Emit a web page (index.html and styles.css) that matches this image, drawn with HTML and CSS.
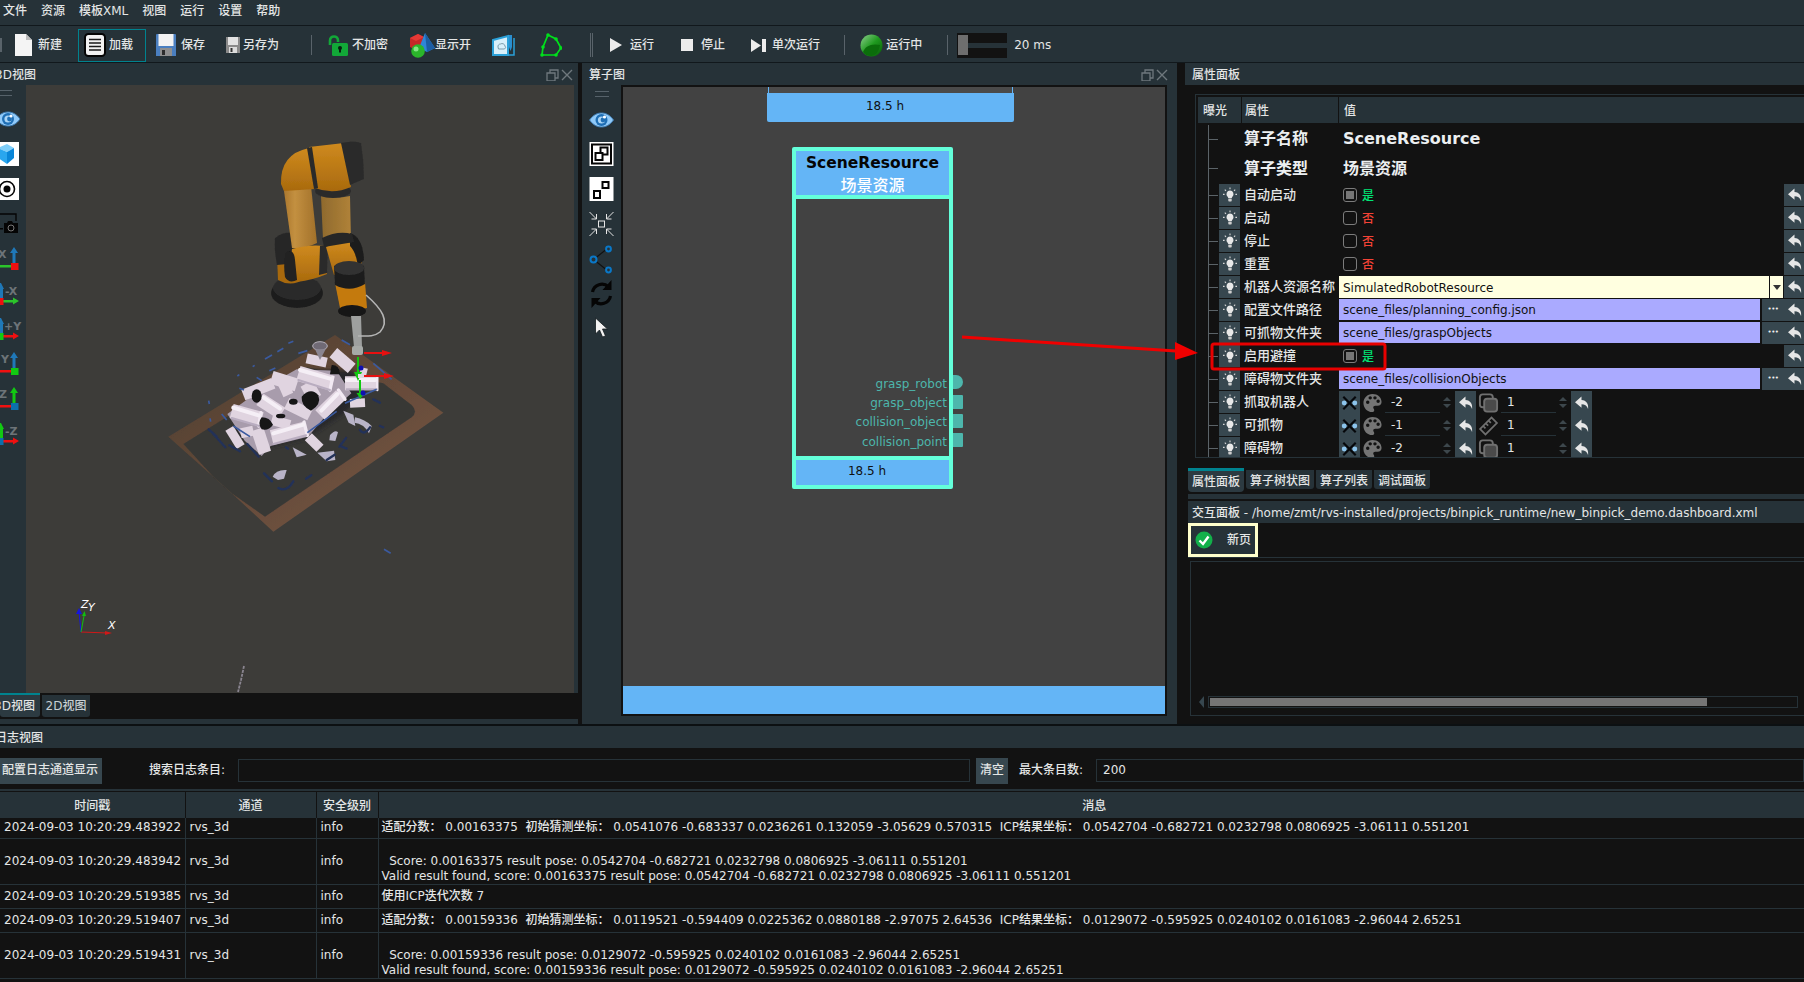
FILE: index.html
```html
<!DOCTYPE html>
<html lang="zh">
<head>
<meta charset="utf-8">
<title>RVS</title>
<link rel="stylesheet" href="styles.css">
</head>
<body>
<svg class="defs" width="0" height="0" aria-hidden="true">
  <symbol id="bulb" viewBox="0 0 16 16">
    <path d="M8 3.5a3.6 3.6 0 0 0-2.4 6.2c.5.6.6 1 .6 1.6h3.6c0-.6.1-1 .6-1.6A3.6 3.6 0 0 0 8 3.5z" fill="#e8e8e8"/>
    <rect x="6.3" y="11.8" width="3.4" height="2.8" rx=".8" fill="#cfcfcf"/>
    <path d="M8 .6v1.6M2.8 2.6l1.2 1.2M13.2 2.6 12 3.8M1 7.4h1.6M13.4 7.4H15" stroke="#d8d8d8" stroke-width="1.1" fill="none"/>
  </symbol>
  <symbol id="back" viewBox="0 0 16 16">
    <path d="M7.5 1.6 1 7.2l6.5 5.6V9.3c3.2 0 5.3 1.2 6.6 4.6.6-5-1.6-8.600-6.600-9z" fill="#e6e6e6"/>
  </symbol>
  <symbol id="cross" viewBox="0 0 22 22">
    <circle cx="5.500" cy="11" r="2.600" fill="#8cc4ec"/><circle cx="16.500" cy="11" r="2.600" fill="#8cc4ec"/>
    <path d="M4.500 4.500 17.500 17.500M17.500 4.500 4.500 17.500" stroke="#05070a" stroke-width="2.200"/>
  </symbol>
  <symbol id="palette" viewBox="0 0 22 22">
    <path fill-rule="evenodd" fill="#747474" d="M11 1.500C5.500 1.500 1.500 5.800 1.500 11s4 9.500 9 9.500c1.700 0 2.300-1 2.300-2 0-1.300-1-1.500-1-2.700 0-1 .8-1.800 2-1.800h2.600c2.400 0 4.100-1.800 4.100-4C20.500 5 16.500 1.500 11 1.500zM6 12a1.800 1.800 0 1 1 0-3.600A1.800 1.800 0 0 1 6 12zm2.600-4.600a1.800 1.800 0 1 1 0-3.600 1.800 1.800 0 0 1 0 3.600zm5 0a1.800 1.800 0 1 1 0-3.600 1.800 1.800 0 0 1 0 3.600zm3.300 3.600a1.800 1.800 0 1 1 0-3.600 1.800 1.800 0 0 1 0 3.600z"/>
  </symbol>
  <symbol id="layers" viewBox="0 0 22 22">
    <rect x="2" y="2" width="13.500" height="13.500" rx="3" fill="none" stroke="#707070" stroke-width="2"/>
    <rect x="6.500" y="6.500" width="13.500" height="13.500" rx="3" fill="#4a4a4a" stroke="#707070" stroke-width="2"/>
  </symbol>
  <symbol id="ruler" viewBox="0 0 22 22">
    <g transform="rotate(-45 11 11)" fill="none" stroke="#707070" stroke-width="1.800">
      <rect x="2.500" y="7" width="17" height="8"/>
      <path d="M7 7v3.500M11 7v3.500M15 7v3.500"/>
    </g>
  </symbol>
  <symbol id="eye" viewBox="0 0 26 16">
    <path d="M1 8C5 2.500 9 1 13 1s8 1.500 12 7c-4 5.500-8 7-12 7S5 13.500 1 8z" fill="#90caf9" stroke="#3b78ad"/>
    <circle cx="13" cy="8" r="6" fill="#1f6fb5"/>
    <circle cx="13" cy="8" r="3.600" fill="#a9d4f5"/>
    <circle cx="14.500" cy="8" r="2.400" fill="#1f6fb5"/>
    <circle cx="16" cy="5" r="1.600" fill="#fff"/>
  </symbol>
</svg>

<nav class="menubar">
  <span>文件</span><span>资源</span><span>模板XML</span><span>视图</span><span>运行</span><span>设置</span><span>帮助</span>
</nav>

<div class="toolbar">
  <i class="tsep tsep-first"></i>
  <div class="tb tb-new">
    <svg width="19" height="22" viewBox="0 0 19 22"><path d="M1 0h11l6 6v16H1z" fill="#f4f4f4"/><path d="M12 0l6 6h-6z" fill="#bdbdbd"/></svg>
    <span>新建</span>
  </div>
  <div class="tb tb-load">
    <svg width="22" height="24" viewBox="0 0 22 24"><rect x="1" y="1" width="20" height="22" rx="3.500" fill="#f2f2f2" stroke="#050505" stroke-width="2"/><path d="M5 6.500h12M5 10h12M5 13.500h12M5 17h12" stroke="#1a1a1a" stroke-width="1.600"/></svg>
    <span>加载</span>
  </div>
  <div class="tb tb-save">
    <svg width="20" height="22" viewBox="0 0 20 22"><path d="M0 1a1 1 0 0 1 1-1h18a1 1 0 0 1 1 1v21H0z" fill="#4a7fc0"/><rect x="2.500" y="0" width="15" height="12" fill="#f3f3f3"/><rect x="4" y="14" width="12" height="8" fill="#8f8f8f"/><rect x="6" y="16" width="3" height="5" fill="#2d2d2d"/></svg>
    <span>保存</span>
  </div>
  <div class="tb tb-saveas">
    <svg width="14" height="16" viewBox="0 0 14 16"><rect width="14" height="16" fill="#8a8a8a"/><rect x="2" y="0" width="10" height="8" fill="#e2e2e2"/><rect x="3" y="10" width="8" height="6" fill="#dcdcdc"/><rect x="4.500" y="11" width="2" height="4" fill="#333"/></svg>
    <span>另存为</span>
  </div>
  <i class="tsep tsep-a"></i>
  <div class="tb tb-lock">
    <svg width="20" height="21" viewBox="0 0 20 21"><path d="M2 10V5.500C2 3 3.800 1.500 6 1.500S10 3 10 5.500V7" fill="none" stroke="#12a838" stroke-width="2.600"/><rect x="4" y="8" width="16" height="13" rx="1.500" fill="#12a838"/><circle cx="12" cy="13" r="2" fill="#06220f"/><rect x="11" y="13" width="2" height="4.500" fill="#06220f"/></svg>
    <span>不加密</span>
  </div>
  <div class="tb tb-show">
    <svg width="25" height="25" viewBox="0 0 25 25"><path d="M0 5l8-4 6 3v9l-8 4-6-3z" fill="#c62828"/><path d="M8 1 14 4l-8 4-6-3z" fill="#e53935"/><path d="M15 0l10 15-8 4-8-4z" fill="#2f86d8"/><path d="M15 0l10 15-8 4z" fill="#1c5da3"/><circle cx="8" cy="18" r="6.800" fill="#2bb62b"/><circle cx="6" cy="16" r="2.500" fill="#85e685"/></svg>
    <span>显示开</span>
  </div>
  <div class="tb tb-blue">
    <svg width="24" height="23" viewBox="0 0 24 23"><path d="M1 6 16 2v19H1z" fill="#d8f0fb" stroke="#2aa0d8" stroke-width="2"/><path d="M6 13a2.500 2.500 0 0 1 2.500-3A3 3 0 0 1 13 12a2 2 0 0 1-.5 3H6.500z" fill="none" stroke="#7a9aaa"/><path d="M20 1v12l-1.500 4-1.500-4V1z" fill="#2a8fd0"/><path d="M16 21h6V4" fill="none" stroke="#2aa0d8" stroke-width="1.500"/></svg>
  </div>
  <div class="tb tb-poly">
    <svg width="22" height="24" viewBox="0 0 22 24"><path d="M8 2 16 6l5 9-5 7H2l1-8z" fill="none" stroke="#00e01c" stroke-width="1.700"/><g fill="#00e01c"><circle cx="8" cy="2" r="1.800"/><circle cx="16" cy="6" r="1.800"/><circle cx="21" cy="15" r="1.800"/><circle cx="16" cy="22" r="1.800"/><circle cx="2" cy="22" r="1.800"/><circle cx="3" cy="14" r="1.800"/></g></svg>
  </div>
  <i class="tsep tsep-double"></i>
  <div class="tb tb-run">
    <svg width="12" height="14" viewBox="0 0 12 14"><path d="M0 0l12 7-12 7z" fill="#ececec"/></svg>
    <span>运行</span>
  </div>
  <div class="tb tb-stop">
    <svg width="12" height="12" viewBox="0 0 12 12"><rect width="12" height="12" fill="#ececec"/></svg>
    <span>停止</span>
  </div>
  <div class="tb tb-step">
    <svg width="15" height="13" viewBox="0 0 15 13"><path d="M0 0l10 6.500L0 13z" fill="#ececec"/><rect x="11" width="4" height="13" fill="#ececec"/></svg>
    <span>单次运行</span>
  </div>
  <i class="tsep tsep-b"></i>
  <div class="tb tb-state">
    <svg width="23" height="23" viewBox="0 0 23 23"><defs><linearGradient id="sph" x1="0" y1="0" x2="1" y2="1"><stop offset="0" stop-color="#8fd08f"/><stop offset=".5" stop-color="#1f9a1f"/><stop offset="1" stop-color="#075a07"/></linearGradient></defs><circle cx="11.500" cy="11.500" r="11" fill="url(#sph)"/><path d="M3 18c2-6 9-9 17-7-1 7-5 11-9 11-3 0-6-1-8-4z" fill="#0b6d0b"/></svg>
    <span>运行中</span>
  </div>
  <i class="tsep tsep-c"></i>
  <div class="speed"><div class="speed-handle"></div><div class="speed-gap"></div></div>
  <span class="speed-label">20 ms</span>
</div>

<main class="docks">
  <section class="dock dock-3d">
    <header class="dock-title title-clip title-3d">
      <span>3D视图</span>
      <svg class="float-icons" width="27" height="12" viewBox="0 0 27 12"><path d="M1 4h8v8H1zM4 4V1h8v8H9" fill="none" stroke="#6f787d" stroke-width="1.300"/><path d="M16 1l10 10M26 1 16 11" stroke="#6f787d" stroke-width="1.400"/></svg>
    </header>
    <div class="view-row">
      <div class="side-tools side-3d">
        <div class="side-handle"></div>
        <svg class="side-cell" viewBox="0 0 26 35"><use href="#eye" x="-5" y="10" width="26" height="16"/></svg>
        <svg class="side-cell" viewBox="0 0 26 35"><rect x="0" y="6" width="19" height="24" fill="#fff"/><path d="M-2 12 7 8l7 4-7 4z" fill="#7fd0fb"/><path d="M-2 12l9 4v12l-9-6z" fill="#2aa6ee"/><path d="M14 12v10l-7 6V16z" fill="#0a86d8"/></svg>
        <svg class="side-cell" viewBox="0 0 26 35"><rect x="0" y="7" width="19" height="22" fill="#fff"/><circle cx="7" cy="18" r="7.500" fill="none" stroke="#050505" stroke-width="1.600"/><circle cx="7" cy="18" r="3.500" fill="#050505"/></svg>
        <svg class="side-cell" viewBox="0 0 26 35"><path d="M0 8h16v7" fill="none" stroke="#050505" stroke-width="1.400"/><rect x="0" y="22" width="3" height="1.500" fill="#050505"/><path d="M4 17h3l1-2h4l1 2h5v10H4z" fill="#050505"/><circle cx="11" cy="22" r="3" fill="none" stroke="#777"/></svg>
        <svg class="side-cell" viewBox="0 0 26 35"><text class="ax-label" x="-2" y="17">X</text><path d="M14 6l4 6h-2.500v10h-3V12H10z" fill="#1f78b8"/><path d="M0 24h11v2.500H0z" fill="#2bc42b"/><rect x="11" y="22" width="7.500" height="7" fill="#ef1010"/></svg>
        <svg class="side-cell" viewBox="0 0 26 35"><text class="ax-label" x="5" y="19">-X</text><path d="M1 7l3 6H3v9H0V7z" fill="#1f78b8"/><path d="M3 24h10v-2.500l6 3.500-6 3.500V26.500H3z" fill="#2bc42b"/><rect x="0" y="22" width="3.500" height="7" fill="#ef1010"/></svg>
        <svg class="side-cell" viewBox="0 0 26 35"><text class="ax-label" x="4" y="19">+Y</text><path d="M1 7l3 6H3v9H0V7z" fill="#1f78b8"/><path d="M3 24h10v-2.500l6 3.500-6 3.500V26.500H3z" fill="#ef1010"/><rect x="0" y="22" width="3.500" height="7" fill="#12c912"/></svg>
        <svg class="side-cell" viewBox="0 0 26 35"><text class="ax-label" x="1" y="17">Y</text><path d="M14 6l4 6h-2.500v10h-3V12H10z" fill="#1f78b8"/><path d="M0 24h11v2.500H0z" fill="#ef1010"/><rect x="11" y="22" width="7.500" height="7" fill="#12c912"/></svg>
        <svg class="side-cell" viewBox="0 0 26 35"><text class="ax-label" x="-1" y="17">Z</text><path d="M14 6l4 6h-2.500v10h-3V12H10z" fill="#12c912"/><path d="M0 24h11v2.500H0z" fill="#ef1010"/><rect x="11" y="22" width="7.500" height="7" fill="#0d6fab"/></svg>
        <svg class="side-cell" viewBox="0 0 26 35"><text class="ax-label" x="5" y="19">-Z</text><path d="M1 7l3 6H3v9H0V7z" fill="#12c912"/><path d="M3 24h10v-2.500l6 3.500-6 3.500V26.500H3z" fill="#ef1010"/><rect x="0" y="22" width="3.500" height="7" fill="#0d6fab"/></svg>
      </div>
      <svg class="scene" viewBox="26 85 548 608" preserveAspectRatio="none">
        <defs>
          <filter id="soft" x="-5%" y="-5%" width="110%" height="110%"><feGaussianBlur stdDeviation=".45"/></filter>
          <filter id="softz" x="-5%" y="-5%" width="110%" height="110%"><feGaussianBlur stdDeviation="1.600"/></filter>
          <filter id="shadow" x="-10%" y="-10%" width="120%" height="120%"><feGaussianBlur stdDeviation="6"/></filter>
          <linearGradient id="wood" x1="0" y1="0" x2="1" y2="1"><stop offset="0" stop-color="#4e3d30"/><stop offset=".55" stop-color="#664b3a"/><stop offset="1" stop-color="#7a5a47"/></linearGradient>
          <linearGradient id="tube" x1="0" y1="0" x2="1" y2="0"><stop offset="0" stop-color="#a9752c"/><stop offset=".35" stop-color="#c39040"/><stop offset="1" stop-color="#a1702a"/></linearGradient>
          <linearGradient id="tube2" x1="0" y1="0" x2="1" y2="0"><stop offset="0" stop-color="#8f6a2e"/><stop offset="1" stop-color="#b08238"/></linearGradient>
          <linearGradient id="orange" x1="0" y1="0" x2="0" y2="1"><stop offset="0" stop-color="#cf8a1e"/><stop offset="1" stop-color="#a96a0e"/></linearGradient>
        </defs>
        <rect x="26" y="85" width="548" height="608" fill="#3d3c39"/>
        <g transform="translate(150 340) scale(.33333)">
          <polygon points="55,290 555,-15 880,218 370,575 245,460 190,410" fill="url(#wood)" filter="url(#softz)"/>
          <path d="M100 312 470 82 700 130 785 195Q805 215 785 232L345 530 245 460 190 410Z" fill="#393936" filter="url(#softz)"/>
          <path d="M250 240 345 160 480 90 610 90 640 160 575 225 470 295 345 325 265 290Z" fill="#28282a" filter="url(#shadow)"/>
          <g filter="url(#softz)">
            <path class="mass" d="M232 222 330 150 440 88 560 92 604 160 520 236 474 290 362 318 335 348 284 302Z"/>
            <g class="pipes">
              <line x1="470" y1="55" x2="530" y2="68" stroke-width="30"/>
              <line x1="550" y1="38" x2="605" y2="85" stroke-width="36"/>
              <line x1="365" y1="112" x2="440" y2="135" stroke-width="40"/>
              <line x1="280" y1="165" x2="370" y2="130" stroke-width="34"/>
              <line x1="330" y1="178" x2="395" y2="220" stroke-width="40"/>
              <line x1="245" y1="213" x2="335" y2="238" stroke-width="44"/>
              <line x1="445" y1="100" x2="548" y2="130" stroke-width="46"/>
              <line x1="470" y1="130" x2="495" y2="175" stroke-width="42"/>
              <line x1="395" y1="120" x2="415" y2="165" stroke-width="32"/>
              <line x1="410" y1="190" x2="480" y2="225" stroke-width="36"/>
              <line x1="510" y1="225" x2="572" y2="165" stroke-width="40"/>
              <line x1="365" y1="292" x2="468" y2="266" stroke-width="44"/>
              <line x1="322" y1="268" x2="345" y2="338" stroke-width="38"/>
              <line x1="365" y1="240" x2="420" y2="255" stroke-width="30"/>
              <line x1="238" y1="265" x2="272" y2="320" stroke-width="28"/>
              <line x1="272" y1="280" x2="310" y2="272" stroke-width="30"/>
              <line x1="585" y1="130" x2="682" y2="130" stroke-width="42"/>
              <line x1="600" y1="190" x2="645" y2="188" stroke-width="26"/>
              <line x1="475" y1="290" x2="510" y2="325" stroke-width="30"/>
              <line x1="630" y1="95" x2="650" y2="100" stroke-width="28"/>
            </g>
            <g class="collar">
              <line x1="548" y1="112" x2="540" y2="150" stroke-width="10"/>
              <line x1="682" y1="110" x2="682" y2="150" stroke-width="7"/>
              <line x1="462" y1="246" x2="472" y2="286" stroke-width="10"/>
              <line x1="565" y1="150" x2="585" y2="178" stroke-width="10"/>
              <line x1="333" y1="218" x2="326" y2="258" stroke-width="10"/>
            </g>
            <g class="pipe-hi">
              <line x1="450" y1="90" x2="540" y2="116"/><line x1="590" y1="120" x2="676" y2="120"/>
              <line x1="370" y1="280" x2="460" y2="254"/><line x1="250" y1="203" x2="326" y2="226"/>
              <line x1="514" y1="212" x2="562" y2="162"/><line x1="340" y1="172" x2="390" y2="206"/>
            </g>
            <g class="pipe-lo">
              <line x1="590" y1="148" x2="680" y2="148"/><line x1="445" y1="120" x2="540" y2="150"/>
              <line x1="370" y1="312" x2="468" y2="286"/><line x1="245" y1="234" x2="328" y2="258"/>
            </g>
            <g fill="#131315">
              <path d="M455 170q28-30 50-4 10 28-22 46-30-14-28-42z"/>
              <path d="M335 232q24 0 34 22-14 20-34 14-14-18 0-36z"/>
              <ellipse cx="320" cy="168" rx="15" ry="20"/>
              <path d="M545 75q24 0 25 28l-30 0z"/>
              <ellipse cx="430" cy="185" rx="13" ry="9"/>
              <ellipse cx="392" cy="228" rx="14" ry="7"/>
            </g>
            <ellipse cx="510" cy="18" rx="22" ry="13" fill="#6f6b75" stroke="#b8b2bc" stroke-width="3"/>
            <path d="M495 28 510 60 527 28z" fill="#8a8590"/>
            <g class="frag">
              <path d="M428 322 470 344 440 352z"/><path d="M540 285q16-18 24-8l-8 26-18-2z"/>
              <path d="M580 212l30 12 6 34-20-10z"/><path d="M502 338 552 332 556 360 530 364z"/>
              <path d="M368 410q10-22 42-20l-8 26-18 4z"/><path d="M615 232q30 6 50 26l-8 22q-16-30-44-32z"/>
            </g>
            <g class="dash-dark">
              <path d="M342 400 366 424M385 444q25 14 45-20M468 416 484 406M630 270q12 18 30-8M530 360l24-16M568 320l20-26"/>
              <path d="M190 282 226 322M238 316 270 334M292 312 326 350M176 268 200 290"/>
              <path d="M670 178 690 188M690 258 700 262M575 320 590 326M408 322 414 326"/>
            </g>
            <g class="dash-blue">
              <path d="M345 57 366 45M382 35 400 25M415 10 430 4M308 80 314 76M262 108 268 104M176 182 178 192M180 235 182 245M215 222 230 240M250 258 300 290M472 278 560 214M585 190 680 148M670 70 725 118M575 0 600 14M445 40 472 32M320 112 335 122M268 145 282 150M358 92 376 84M702 628 722 640"/>
            </g>
          </g>
        </g>
        <g filter="url(#soft)">
          <ellipse cx="297" cy="293" rx="26" ry="15" fill="#1c1c1c"/>
          <ellipse cx="297" cy="288" rx="24" ry="12" fill="#2b2b2b"/>
          <path d="M277 255h26l2 23q-13 10-27 2z" fill="#a8690f"/>
          <path d="M275 238q9-7 21-5l2 30-21 2q-3-14-2-27z" fill="#272727"/>
          <path d="M321 196q14 3 29 0l1 46-28-3z" fill="url(#tube2)"/>
          <path d="M283 184l28 2 6 57q-12 6-25 5z" fill="url(#tube)"/>
          <path d="M292 249q17-5 33-3l2 28q-14 6-30 8q-8-16-5-33z" fill="url(#orange)"/>
          <path d="M286 252q8-4 9 8l2 20q-8 4-12-3q-2-14 1-25z" fill="#202020"/>
          <path d="M320 246l-1 29 8-2 1-28z" fill="#2c2c2c"/>
          <path d="M326 247q16-8 29-3q7 8 7 19l-28 12z" fill="url(#orange)"/>
          <path d="M350 233q13 4 14 27l-6 6q-2-14-8-20z" fill="#1d1d1d"/>
          <path d="M322 238q16-8 30-4l2 8-30 5z" fill="#272727"/>
          <ellipse cx="333" cy="191" rx="18" ry="7" fill="#2b2b2b"/>
          <path d="M281 184q-1-30 28-36l6 41-31 2z" fill="url(#orange)"/>
          <path d="M309 147l35-4 7 44q-18 8-36 1z" fill="url(#orange)"/>
          <path d="M307 148l5-1 6 41-4 1z" fill="#2a2a2a"/>
          <path d="M341 143q14-3 20 0q3 18 3 36l-14 6z" fill="#2b2b2b"/>
          <path d="M335 283l30-1 2 26-26 5z" fill="#c47a10"/>
          <path d="M334 266q15-8 30 0l1 18q-15 9-30 1z" fill="#1f1f1f"/>
          <ellipse cx="349" cy="268" rx="15" ry="7" fill="#333"/>
          <ellipse cx="352" cy="311" rx="14" ry="6" fill="#151515"/>
          <path d="M351 316h10l1 31h-8z" fill="#9ea09f"/>
          <rect x="352" y="346" width="11" height="9" rx="2" fill="#a7aaa7"/>
          <path d="M366 295c16 14 24 26 14 37-6 5-14 4-22 4" fill="none" stroke="#b5b5b5" stroke-width="1.600"/>
        </g>
        <path d="M364 352h18v-2l10 3-10 3v-2h-18z" fill="#e81010"/>
        <path d="M364 375h20v-2l10 3-10 3v-2h-20z" fill="#e81010"/>
        <rect x="357" y="357" width="2" height="20" fill="#10c810"/>
        <path d="M354 372h8l-4 9z" fill="#10c810"/>
        <rect x="359" y="380" width="2" height="15" fill="#10c810"/>
        <path d="M356.500 393h7l-3 6z" fill="#10c810"/>
        <circle cx="361" cy="368" r="2.500" fill="#1010b0"/><circle cx="363" cy="393" r="2.500" fill="#1010b0"/>
        <rect x="358" y="374" width="4" height="4" fill="#ddd"/>
        <path d="M244 666l-3 14-3 12" fill="none" stroke="#8a8590" stroke-width="1.800" stroke-dasharray="3 1"/>
        <line x1="81" y1="632" x2="108" y2="633" stroke="#d01818" stroke-width="1"/><path d="M105 631l7 2-7 2z" fill="#d01818"/>
        <line x1="81" y1="632" x2="79" y2="612" stroke="#1515e0"/><path d="M76 614l3-6 3 6z" fill="#1515e0"/>
        <line x1="81" y1="632" x2="84" y2="616" stroke="#10c010"/><path d="M82 616l2.500-5 1.500 5z" fill="#10c010"/>
        <text class="gizmo" x="81" y="608">Z</text><text class="gizmo" x="88" y="611">Y</text><text class="gizmo" x="108" y="629">X</text>
      </svg>
    </div>
    <div class="tabs-3d">
      <span class="tab3d tab3d-on"><span class="clip-left">3D视图</span></span>
      <span class="tab3d">2D视图</span>
    </div>
  </section>

  <section class="dock dock-graph">
    <header class="dock-title title-graph">
      <span>算子图</span>
      <svg class="float-icons" width="27" height="12" viewBox="0 0 27 12"><path d="M1 4h8v8H1zM4 4V1h8v8H9" fill="none" stroke="#6f787d" stroke-width="1.300"/><path d="M16 1l10 10M26 1 16 11" stroke="#6f787d" stroke-width="1.400"/></svg>
    </header>
    <div class="graph-row">
      <div class="side-tools side-graph">
        <div class="side-handle"></div>
        <svg class="side-cell" viewBox="0 0 38 35"><use href="#eye" x="6" y="10" width="26" height="16"/></svg>
        <svg class="side-cell" viewBox="0 0 38 35"><rect x="7" y="5" width="24" height="24" fill="#fff"/><rect x="9.500" y="7.500" width="19" height="19" fill="none" stroke="#050505" stroke-width="2"/><rect x="18" y="10.500" width="7" height="7" fill="none" stroke="#050505" stroke-width="2"/><rect x="13" y="16" width="7" height="7" fill="#fff" stroke="#050505" stroke-width="2"/></svg>
        <svg class="side-cell" viewBox="0 0 38 35"><rect x="7" y="5" width="24" height="24" fill="#fff"/><rect x="11.500" y="19" width="6" height="7" fill="none" stroke="#050505" stroke-width="2"/><rect x="20" y="10" width="6" height="6" fill="none" stroke="#050505" stroke-width="2"/></svg>
        <svg class="side-cell" viewBox="0 0 38 35"><g fill="none" stroke="#e6e6e6" stroke-width="1"><rect x="16" y="14" width="6" height="6"/><path d="M7 5l7 7M14 7v5H9M31 5l-7 7M24 7v5h5M7 29l7-7M14 27v-5H9M31 29l-7-7M24 27v-5h5"/></g></svg>
        <svg class="side-cell" viewBox="0 0 38 35"><path d="M13 16l10-8M13 19l10 8" stroke="#111" stroke-width="1.200"/><g fill="none" stroke="#0a78c8" stroke-width="2"><circle cx="11" cy="17.500" r="3"/><circle cx="26" cy="7" r="2.400"/><circle cx="26" cy="28" r="2.400"/></g></svg>
        <svg class="side-cell" viewBox="0 0 38 35"><g fill="none" stroke="#050505" stroke-width="3.200"><path d="M10 15a9.500 9.500 0 0 1 16-5"/><path d="M28 19a9.500 9.500 0 0 1-16 5"/></g><path d="M29 3v10h-9z" fill="#050505"/><path d="M9 31V21h9z" fill="#050505"/></svg>
        <svg class="side-cell" viewBox="0 0 38 35"><path d="M13 6v16l4-4 3 7 3-1-3-7h5z" fill="#f2f2f2" stroke="#141c20" stroke-width=".8"/></svg>
      </div>
      <div class="canvas">
        <div class="node-prev"><div class="node-prev-in"></div><div class="node-prev-foot">18.5 h</div></div>
        <div class="node">
          <div class="node-head"><b>SceneResource</b><span>场景资源</span></div>
          <div class="node-body">
            <div class="port"><span>grasp_robot</span></div>
            <div class="port"><span>grasp_object</span></div>
            <div class="port"><span>collision_object</span></div>
            <div class="port"><span>collision_point</span></div>
          </div>
          <div class="node-foot">18.5 h</div>
          <i class="pin pin-round pin-1"></i>
          <i class="pin pin-2"></i>
          <i class="pin pin-3"></i>
          <i class="pin pin-4"></i>
        </div>
        <div class="canvas-strip"></div>
      </div>
    </div>
  </section>

  <section class="dock dock-right">
    <header class="dock-title title-right"><span>属性面板</span></header>
    <div class="props-wrap">
      <div class="props">
        <div class="props-head"><span class="ph-a">曝光</span><span class="ph-b">属性</span><span class="ph-c">值</span></div>
        <div class="prow prow-big"><i class="tree"></i><b class="big-label">算子名称</b><b class="big-val">SceneResource</b></div>
        <div class="prow prow-big"><i class="tree"></i><b class="big-label">算子类型</b><b class="big-val">场景资源</b></div>

        <div class="prow"><i class="tree"></i><span class="bulb"><svg width="16" height="16"><use href="#bulb"/></svg></span><label>自动启动</label><span class="vcheck"><i class="cb cb-on"></i><em class="yes">是</em></span><span class="reset"><svg width="16" height="16"><use href="#back"/></svg></span></div>
        <div class="prow"><i class="tree"></i><span class="bulb"><svg width="16" height="16"><use href="#bulb"/></svg></span><label>启动</label><span class="vcheck"><i class="cb"></i><em class="no">否</em></span><span class="reset"><svg width="16" height="16"><use href="#back"/></svg></span></div>
        <div class="prow"><i class="tree"></i><span class="bulb"><svg width="16" height="16"><use href="#bulb"/></svg></span><label>停止</label><span class="vcheck"><i class="cb"></i><em class="no">否</em></span><span class="reset"><svg width="16" height="16"><use href="#back"/></svg></span></div>
        <div class="prow"><i class="tree"></i><span class="bulb"><svg width="16" height="16"><use href="#bulb"/></svg></span><label>重置</label><span class="vcheck"><i class="cb"></i><em class="no">否</em></span><span class="reset"><svg width="16" height="16"><use href="#back"/></svg></span></div>

        <div class="prow"><i class="tree"></i><span class="bulb"><svg width="16" height="16"><use href="#bulb"/></svg></span><label>机器人资源名称</label><span class="combo"><span class="combo-text">SimulatedRobotResource</span><span class="combo-arrow"></span></span><span class="reset"><svg width="16" height="16"><use href="#back"/></svg></span></div>
        <div class="prow"><i class="tree"></i><span class="bulb"><svg width="16" height="16"><use href="#bulb"/></svg></span><label>配置文件路径</label><span class="pathv"><span class="path-text">scene_files/planning_config.json</span><span class="path-btn">•••</span></span><span class="reset"><svg width="16" height="16"><use href="#back"/></svg></span></div>
        <div class="prow"><i class="tree"></i><span class="bulb"><svg width="16" height="16"><use href="#bulb"/></svg></span><label>可抓物文件夹</label><span class="pathv"><span class="path-text">scene_files/graspObjects</span><span class="path-btn">•••</span></span><span class="reset"><svg width="16" height="16"><use href="#back"/></svg></span></div>
        <div class="prow"><i class="tree"></i><span class="bulb"><svg width="16" height="16"><use href="#bulb"/></svg></span><label>启用避撞</label><span class="vcheck"><i class="cb cb-on"></i><em class="yes">是</em></span><span class="reset"><svg width="16" height="16"><use href="#back"/></svg></span></div>
        <div class="prow"><i class="tree"></i><span class="bulb"><svg width="16" height="16"><use href="#bulb"/></svg></span><label>障碍物文件夹</label><span class="pathv"><span class="path-text">scene_files/collisionObjects</span><span class="path-btn">•••</span></span><span class="reset"><svg width="16" height="16"><use href="#back"/></svg></span></div>

        <div class="prow"><i class="tree"></i><span class="bulb"><svg width="16" height="16"><use href="#bulb"/></svg></span><label>抓取机器人</label>
          <span class="vstyle">
            <span class="sq sq-x"><svg width="22" height="22"><use href="#cross"/></svg></span>
            <span class="sq"><svg width="22" height="22"><use href="#palette"/></svg></span>
            <span class="spin"><span>-2</span></span><span class="spin-arrows"><i></i><i></i></span>
            <span class="sq sq-x"><svg width="16" height="16"><use href="#back"/></svg></span>
            <span class="sq"><svg width="22" height="22"><use href="#layers"/></svg></span>
            <span class="spin"><span>1</span></span><span class="spin-arrows"><i></i><i></i></span>
            <span class="sq sq-x"><svg width="16" height="16"><use href="#back"/></svg></span>
          </span></div>
        <div class="prow"><i class="tree"></i><span class="bulb"><svg width="16" height="16"><use href="#bulb"/></svg></span><label>可抓物</label>
          <span class="vstyle">
            <span class="sq sq-x"><svg width="22" height="22"><use href="#cross"/></svg></span>
            <span class="sq"><svg width="22" height="22"><use href="#palette"/></svg></span>
            <span class="spin"><span>-1</span></span><span class="spin-arrows"><i></i><i></i></span>
            <span class="sq sq-x"><svg width="16" height="16"><use href="#back"/></svg></span>
            <span class="sq"><svg width="22" height="22"><use href="#ruler"/></svg></span>
            <span class="spin"><span>1</span></span><span class="spin-arrows"><i></i><i></i></span>
            <span class="sq sq-x"><svg width="16" height="16"><use href="#back"/></svg></span>
          </span></div>
        <div class="prow"><i class="tree"></i><span class="bulb"><svg width="16" height="16"><use href="#bulb"/></svg></span><label>障碍物</label>
          <span class="vstyle">
            <span class="sq sq-x"><svg width="22" height="22"><use href="#cross"/></svg></span>
            <span class="sq"><svg width="22" height="22"><use href="#palette"/></svg></span>
            <span class="spin"><span>-2</span></span><span class="spin-arrows"><i></i><i></i></span>
            <span class="sq sq-x"><svg width="16" height="16"><use href="#back"/></svg></span>
            <span class="sq"><svg width="22" height="22"><use href="#layers"/></svg></span>
            <span class="spin"><span>1</span></span><span class="spin-arrows"><i></i><i></i></span>
            <span class="sq sq-x"><svg width="16" height="16"><use href="#back"/></svg></span>
          </span></div>
      </div>
      <div class="rtabs">
        <span class="rtab rtab-on">属性面板</span><span class="rtab">算子树状图</span><span class="rtab">算子列表</span><span class="rtab">调试面板</span>
      </div>
    </div>
    <div class="band"></div>
    <header class="dock-title dash-title"><span>交互面板 - /home/zmt/rvs-installed/projects/binpick_runtime/new_binpick_demo.dashboard.xml</span></header>
    <div class="dash-wrap">
      <div class="page-tab">
        <svg width="18" height="18" viewBox="0 0 18 18"><circle cx="9" cy="9" r="8.500" fill="#12b04a"/><path d="M4.500 9.500 8 13l5.500-7.500" fill="none" stroke="#fff" stroke-width="2.400"/></svg>
        <span>新页</span>
      </div>
      <div class="dash-outer">
        <div class="dash-inner">
          <div class="hscroll"><i class="hs-left"></i><div class="hs-track"><div class="hs-thumb"></div></div></div>
        </div>
      </div>
    </div>
  </section>
</main>

<section class="log">
  <header class="dock-title log-title title-clip"><span>日志视图</span></header>
  <div class="log-filter">
    <button class="log-btn log-cfg">配置日志通道显示</button>
    <span class="log-lab lab-search">搜索日志条目:</span>
    <div class="log-input log-input-a"></div>
    <button class="log-btn log-clear">清空</button>
    <span class="log-lab lab-max">最大条目数:</span>
    <div class="log-input log-input-b">200</div>
  </div>
  <table class="log-table">
    <colgroup><col class="c-time"><col class="c-chan"><col class="c-level"><col class="c-msg"></colgroup>
    <thead><tr><th>时间戳</th><th>通道</th><th>安全级别</th><th>消息</th></tr></thead>
    <tbody>
      <tr class="r1"><td>2024-09-03 10:20:29.483922</td><td>rvs_3d</td><td>info</td><td class="msg">适配分数： 0.00163375  初始猜测坐标： 0.0541076 -0.683337 0.0236261 0.132059 -3.05629 0.570315  ICP结果坐标： 0.0542704 -0.682721 0.0232798 0.0806925 -3.06111 0.551201</td></tr>
      <tr class="r2"><td>2024-09-03 10:20:29.483942</td><td>rvs_3d</td><td>info</td><td class="msg msg-two">  Score: 0.00163375 result pose: 0.0542704 -0.682721 0.0232798 0.0806925 -3.06111 0.551201
Valid result found, score: 0.00163375 result pose: 0.0542704 -0.682721 0.0232798 0.0806925 -3.06111 0.551201</td></tr>
      <tr class="r3"><td>2024-09-03 10:20:29.519385</td><td>rvs_3d</td><td>info</td><td class="msg">使用ICP迭代次数 7</td></tr>
      <tr class="r3"><td>2024-09-03 10:20:29.519407</td><td>rvs_3d</td><td>info</td><td class="msg">适配分数： 0.00159336  初始猜测坐标： 0.0119521 -0.594409 0.0225362 0.0880188 -2.97075 2.64536  ICP结果坐标： 0.0129072 -0.595925 0.0240102 0.0161083 -2.96044 2.65251</td></tr>
      <tr class="r2"><td>2024-09-03 10:20:29.519431</td><td>rvs_3d</td><td>info</td><td class="msg msg-two">  Score: 0.00159336 result pose: 0.0129072 -0.595925 0.0240102 0.0161083 -2.96044 2.65251
Valid result found, score: 0.00159336 result pose: 0.0129072 -0.595925 0.0240102 0.0161083 -2.96044 2.65251</td></tr>
    </tbody>
  </table>
</section>

<svg class="annot" viewBox="0 0 1804 982" aria-hidden="true">
  <path d="M962 337 1176 351" stroke="#f00000" stroke-width="3" fill="none"/>
  <path d="M1175 342 1198 353 1175 360z" fill="#f00000"/>
  <rect x="1212" y="344" width="173" height="25" rx="2" fill="none" stroke="#e80000" stroke-width="3"/>
</svg>
</body>
</html>
```
FILE: styles.css
```css
* { box-sizing: border-box; }
html, body { margin: 0; padding: 0; }
body {
  width: 1804px;
  height: 982px;
  overflow: hidden;
  position: relative;
  background: #121212;
  color: #e4e6e6;
  font: 500 12px/15px "DejaVu Sans", "Noto Sans CJK SC", sans-serif;
  display: flex;
  flex-direction: column;
}
.defs { position: absolute; }
svg { display: block; }
em, i { font-style: normal; }

/* menu */
.menubar {
  height: 26px;
  flex: none;
  display: flex;
  gap: 14px;
  align-items: center;
  padding: 0 0 2px 3px;
  background: #263238;
  border-bottom: 1px solid #11181c;
}

/* toolbar */
.toolbar {
  height: 37px;
  flex: none;
  display: flex;
  align-items: center;
  padding-top: 2px;
  background: #263238;
  border-bottom: 1px solid #11181c;
}
.tb { display: flex; align-items: center; flex: none; }
.tsep { flex: none; width: 1px; height: 20px; background: #59636a; }
.tsep-first { height: 14px; width: 2px; }
.tb-new { margin-left: 12px; gap: 5px; }
.tb-load { margin-left: 16px; width: 68px; height: 33px; padding-left: 5px; gap: 3px; border: 1px solid #00838f; }
.tb-save { margin-left: 10px; gap: 5px; }
.tb-saveas { margin-left: 21px; gap: 3px; }
.tsep-a { margin-left: 32px; }
.tb-lock { margin-left: 16px; gap: 4px; }
.tb-show { margin-left: 22px; }
.tb-blue { margin-left: 21px; }
.tb-poly { margin-left: 24px; }
.tsep-double { margin-left: 28px; width: 3px; border-left: 1px solid #59636a; border-right: 1px solid #59636a; background: none; height: 24px; }
.tb-run { margin-left: 17px; gap: 8px; }
.tb-stop { margin-left: 27px; gap: 8px; }
.tb-step { margin-left: 26px; gap: 6px; }
.tsep-b { margin-left: 24px; }
.tb-state { margin-left: 15px; gap: 3px; }
.tsep-c { margin-left: 25px; }
.speed { flex: none; margin-left: 9px; width: 50px; height: 25px; background: #121212; display: flex; align-items: center; padding-left: 1px; }
.speed-handle { width: 10px; height: 20px; background: #6e6e6e; }
.speed-gap { flex: 1; height: 5px; background: #263238; }
.speed-label { margin-left: 7px; }

/* docks */
.docks { height: 661px; flex: none; display: flex; background: #121212; }
.dock { display: flex; flex-direction: column; }
.dock-3d { width: 578px; background: #263238; }
.dock-graph { width: 595px; margin-left: 4px; background: #263238; }
.dock-right { width: 619px; margin-left: 8px; }
.dock-title {
  height: 22px;
  flex: none;
  display: flex;
  align-items: center;
  justify-content: space-between;
  padding: 2px 4px 0 7px;
  background: #263238;
}
.title-clip { padding-left: 0; }
.title-clip > span { margin-left: -5px; }
.title-3d { padding-right: 5px; }
.title-graph { padding-right: 9px; }
.view-row { height: 608px; flex: none; display: flex; padding-right: 4px; }
.side-tools { flex: none; display: flex; flex-direction: column; }
.side-3d { width: 26px; }
.side-graph { width: 39px; padding-top: 1px; }
.side-handle { height: 16px; flex: none; display: flex; align-items: center; justify-content: center; }
.side-3d .side-handle { justify-content: flex-start; }
.side-handle::before { content: ""; width: 14px; height: 4px; border-top: 1px solid #56626a; border-bottom: 1px solid #56626a; }
.side-3d .side-handle::before { width: 12px; }
.side-cell { flex: none; height: 35px; width: 100%; }
.ax-label { font: bold 11px "DejaVu Sans", sans-serif; fill: #6d7478; }
.scene { flex: 1; height: 608px; }
.gizmo { font: italic 11px "DejaVu Sans", sans-serif; fill: #fff; }
.mass { fill: #a89cac; }
.pipes line { stroke: #e0d4e0; }
.collar line { stroke: #f2e9f3; stroke-linecap: round; }
.pipe-hi line { stroke: #f5eff6; stroke-width: 12; stroke-linecap: round; }
.pipe-lo line { stroke: #b9adc0; stroke-width: 6; stroke-linecap: round; }
.frag path { fill: #b9b4c8; }
.dash-dark path { stroke: #243058; stroke-width: 7; fill: none; stroke-linecap: round; }
.dash-blue path { stroke: #3a5aa0; stroke-width: 5; fill: none; }
.tabs-3d { height: 26px; flex: none; background: #121212; display: flex; align-items: flex-start; gap: 2px; }
.tab3d { height: 22px; margin-top: 2px; width: 48px; flex: none; border-radius: 0 0 3px 3px; background: #263238; color: #c8d0d4; text-align: center; line-height: 22px; }
.tab3d-on { width: 40px; height: 24px; margin-top: 0; border-top: 2px solid #00838f; background: #2c3a41; color: #e4e6e6; text-align: left; }
.clip-left { margin-left: -6px; display: inline-block; }

/* graph */
.graph-row { flex: 1; display: flex; padding: 0 10px 8px 0; min-height: 0; }
.canvas {
  flex: 1;
  position: relative;
  overflow: hidden;
  background: #424242;
  border: 2px solid #121212;
}
.node-prev { position: absolute; left: 144px; top: 0; width: 247px; height: 35px; }
.node-prev-in { height: 6px; margin: 0 1px; background: #4a4a4a; border: 1px solid #64b5f6; border-top: 0; border-bottom: 0; }
.node-prev-foot { height: 29px; background: #64b5f6; color: #101010; text-align: center; line-height: 27px; border-radius: 0 0 2px 2px; padding-right: 11px; }
.node {
  position: absolute;
  left: 169px;
  top: 60px;
  width: 161px;
  height: 342px;
  border: 4px solid #64ffda;
  border-radius: 2px;
  display: flex;
  flex-direction: column;
}
.node-head { flex: none; background: #64b5f6; display: flex; flex-direction: column; align-items: center; border-bottom: 4px solid #64ffda; height: 48px; }
.node-head b { color: #050505; font-size: 15.500px; line-height: 20px; margin-top: 2px; }
.node-head span { color: #fff; font-size: 16px; line-height: 20px; margin-top: 3px; height: 19px; }
.node-body { flex: 1; display: flex; flex-direction: column; align-items: flex-end; justify-content: flex-end; padding: 0 2px 4px 0; }
.port { height: 19.300px; color: #4db6ac; line-height: 19px; }
.node-foot { flex: none; height: 29px; background: #64b5f6; border-top: 4px solid #64ffda; color: #101010; text-align: center; line-height: 23px; padding-right: 11px; }
.pin { position: absolute; left: 157px; width: 10px; height: 14px; background: #4db6ac; border-radius: 0 1px 1px 0; }
.pin-round { border-radius: 0 7px 7px 0; }
.pin-1 { top: 224px; }
.pin-2 { top: 244px; }
.pin-3 { top: 263px; }
.pin-4 { top: 282px; }
.canvas-strip { position: absolute; left: 0; right: 0; bottom: 0; height: 28px; background: #64b5f6; }

/* properties */
.props-wrap { height: 409px; flex: none; padding: 9px 0 0 10px; background: #121212; }
.props {
  height: 364px;
  overflow: hidden;
  border: 1px solid #263238;
  border-right: 0;
  padding: 2px 0 0 2px;
}
.props-head { height: 26px; display: flex; gap: 1px; background: #121212; }
.props-head span { background: #263238; display: flex; align-items: center; padding-left: 5px; padding-top: 2px; }
.ph-a { width: 43px; }
.ph-b { width: 96px; }
.props-head .ph-b { padding-left: 3px; }
.ph-c { flex: 1; }
.prow { height: 23px; display: flex; align-items: stretch; }
.prow-big { height: 30px; align-items: center; font-size: 16px; line-height: 20px; padding-top: 2px; }
.prow-big + .prow-big { height: 31px; padding-top: 0; }
.tree {
  flex: none;
  width: 21px;
  align-self: stretch;
  background:
    linear-gradient(#5b6368, #5b6368) 10px 50% / 10px 1px no-repeat,
    linear-gradient(#5b6368, #5b6368) 10px 0 / 1px 100% no-repeat;
}
.big-label { flex: none; width: 99px; margin-left: 25px; font-weight: bold; color: #eceff1; }
.big-val { font-weight: bold; color: #eceff1; }
.bulb { flex: none; width: 21px; height: 22px; background: #37474f; display: flex; align-items: center; justify-content: center; }
.prow label { flex: none; width: 99px; padding-left: 4px; font-size: 13px; line-height: 22px; white-space: nowrap; }
.vcheck { flex: none; width: 445px; display: flex; align-items: center; padding-left: 4px; gap: 5px; height: 22px; }
.vcheck em { padding-top: 2px; }
.cb { width: 14px; height: 14px; border: 1px solid #7c7c7c; border-radius: 3px; padding: 2px; display: block; }
.cb-on::before { content: ""; display: block; width: 8px; height: 8px; background: #767676; }
.yes { color: #00e676; }
.no { color: #f44336; }
.combo { flex: none; width: 445px; height: 22px; display: flex; gap: 1px; }
.combo-text { flex: 1; background: #ffffe0; color: #111; padding-left: 4px; line-height: 24px; }
.combo-arrow { width: 13px; background: #ffffe0; display: flex; align-items: center; justify-content: center; margin-right: 1px; }
.combo-arrow::before { content: ""; border: 4px solid transparent; border-top: 5px solid #333; margin-top: 5px; }
.pathv { flex: none; width: 445px; height: 22px; display: flex; gap: 2px; }
.path-text { flex: 1; background: #aaaaff; color: #111; padding-left: 4px; line-height: 22px; margin-bottom: 1px; }
.path-btn { width: 22px; background: #37474f; color: #eee; font-size: 7px; line-height: 20px; text-align: center; letter-spacing: -.5px; }
.reset { flex: none; width: 20px; height: 22px; background: #37474f; display: flex; align-items: center; padding-left: 3px; }
.reset svg { flex: none; }
.vstyle { display: flex; gap: 2px; height: 23px; }
.sq { flex: none; width: 21px; height: 23px; display: flex; align-items: center; justify-content: center; }
.sq-x { background: #37474f; }
.spin { width: 55px; height: 22px; border-bottom: 1px solid #263238; line-height: 22px; padding-left: 6px; flex: none; }
.spin-arrows { width: 13px; flex: none; display: flex; flex-direction: column; align-items: center; justify-content: center; gap: 3px; margin-left: -2px; }
.spin-arrows i { border: 4px solid transparent; border-bottom: 4px solid #3d474c; border-top: 0; }
.spin-arrows i + i { border-bottom: 0; border-top: 4px solid #3d474c; }

.rtabs { display: flex; align-items: flex-start; gap: 2px; height: 36px; margin-left: -7px; padding-top: 10px; }
.rtab { height: 19px; margin-top: 2px; padding: 0 4px; border-radius: 0 0 3px 3px; background: #263238; line-height: 22px; overflow: hidden; flex: none; }
.rtab-on { width: 56px; height: 24px; margin-top: 0; border-top: 3px solid #00838f; background: #2c3a41; line-height: 22px; border-radius: 0 0 4px 4px; }
.band { height: 5px; flex: none; background: #263238; margin-left: 3px; }
.dash-title { height: 22px; margin: 2px 0 0 3px; padding-left: 4px; }
.dash-wrap { flex: 1; padding: 0 0 0 3px; display: flex; flex-direction: column; background: #121212; min-height: 0; }
.page-tab { width: 70px; height: 34px; flex: none; border: 3px solid #ffffcc; background: #263238; display: flex; align-items: center; padding-left: 4px; gap: 14px; }
.dash-outer { flex: 1; border-top: 1px solid #263238; padding: 3px 0 8px 2px; min-height: 0; }
.dash-inner { height: 100%; border: 1px solid #263238; border-right: 0; display: flex; align-items: flex-end; padding: 0 0 7px 8px; }
.hscroll { flex: 1; display: flex; align-items: center; gap: 4px; height: 12px; margin-right: 6px; }
.hs-left { border: 6px solid transparent; border-right: 5px solid #37474f; border-left: 0; }
.hs-track { flex: 1; height: 12px; border: 1px solid #263238; background: #121212; padding: 1px; }
.hs-thumb { width: 497px; height: 100%; background: #757575; }

/* log */
.log { flex: 1; min-height: 0; background: #121212; border-top: 2px solid #0c1012; }
.log-title { height: 22px; }
.log-filter { height: 43px; display: flex; align-items: center; border-bottom: 2px solid #263238; padding-top: 4px; }
.log-btn { flex: none; height: 26px; border: 0; padding: 0; background: #37474f; color: #e4e6e6; font: inherit; }
.log-cfg { width: 102px; text-align: right; padding-right: 4px; }
.log-clear { width: 32px; margin-left: 6px; }
.log-lab { flex: none; }
.lab-search { margin-left: 47px; width: 89px; }
.lab-max { margin-left: 11px; width: 77px; }
.log-input { height: 23px; border: 1px solid #263238; line-height: 21px; padding-left: 6px; flex: none; }
.log-input-a { width: 732px; }
.log-input-b { flex: 1; }
.log-table { table-layout: fixed; width: 1811px; border-collapse: collapse; margin-top: 1px; }
.c-time { width: 185px; }
.c-chan { width: 131px; }
.c-level { width: 62px; }
.log-table th { height: 26px; background: #263238; font-weight: inherit; padding: 2px 0 0; border-right: 1px solid #121212; }
.log-table td { padding: 0 0 0 4px; border-right: 1px solid #263238; border-bottom: 1px solid #263238; white-space: pre; vertical-align: middle; line-height: 15px; }
.log-table td.msg { border-right: 0; padding-left: 3px; }
.log-table td.msg-two { padding-top: 15px; }
.r1 td { height: 20px; }
.r2 td { height: 46px; }
.r3 td { height: 24px; }

.annot { position: absolute; left: 0; top: 0; width: 1804px; height: 982px; pointer-events: none; }
```
